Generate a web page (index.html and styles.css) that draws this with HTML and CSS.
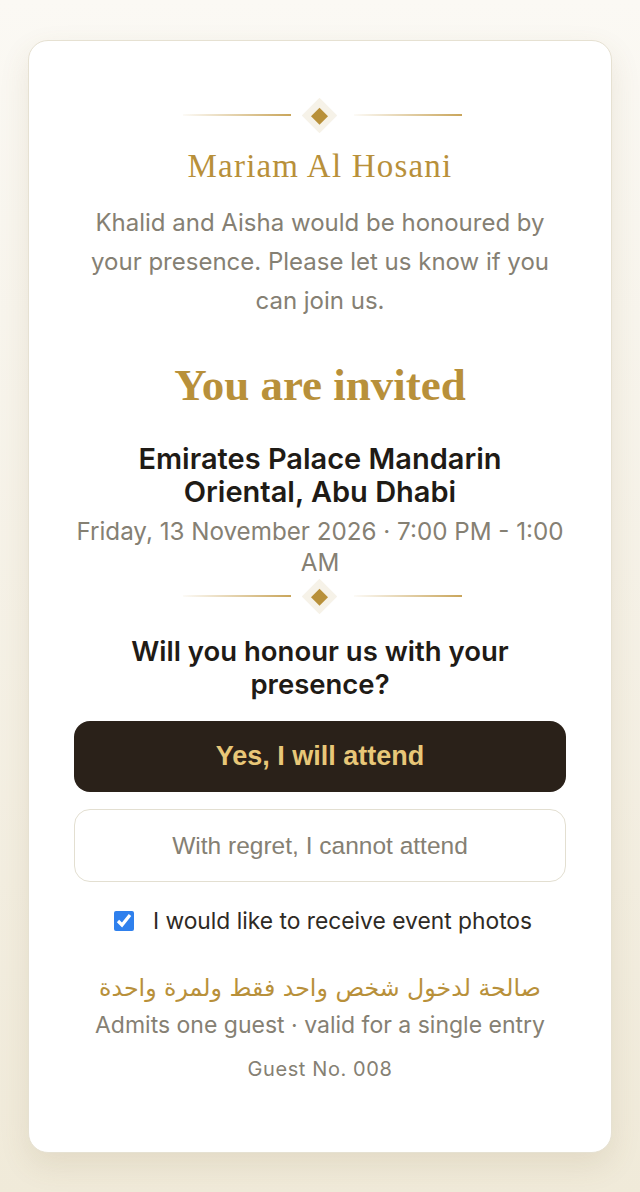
FILE: index.html
```html
<!DOCTYPE html>
<html lang="en">
<head>
  <meta charset="UTF-8" />
  <meta name="viewport" content="width=device-width, initial-scale=1.0" />
  <title>Invitation RSVP</title>
  <link rel="stylesheet" href="styles.css">
</head>
<body>

  <div class="card">
    <div class="ornament">
      <span class="line"></span>
      <span class="gem"><span class="gem-inner"></span></span>
      <span class="line"></span>
    </div>

    <h2 class="guest-name">Mariam Al Hosani</h2>
    <p class="intro">Khalid and Aisha would be honoured by your presence. Please let us know if you can join us.</p>

    <h1 class="title">You are invited</h1>

    <div class="venue">Emirates Palace Mandarin Oriental, Abu Dhabi</div>
    <div class="date">Friday, 13 November 2026 · 7:00 PM - 1:00 AM</div>

    <div class="ornament">
      <span class="line"></span>
      <span class="gem"><span class="gem-inner"></span></span>
      <span class="line"></span>
    </div>

    <h3 class="question">Will you honour us with your presence?</h3>

    <div class="actions">
      <button class="btn btn-yes" type="button">Yes, I will attend</button>
      <button class="btn btn-no" type="button">With regret, I cannot attend</button>
    </div>

    <label class="photos">
      <input type="checkbox" checked />
      <span>I would like to receive event photos</span>
    </label>

    <p class="arabic" dir="rtl" lang="ar">صالحة لدخول شخص واحد فقط ولمرة واحدة</p>
    <p class="admits">Admits one guest · valid for a single entry</p>
    <p class="guest-no">Guest No. 008</p>
  </div>

</body>
</html>
```

FILE: styles.css
```css
* {
  margin: 0;
  padding: 0;
  box-sizing: border-box;
}

body {
  min-height: 1192px;
  padding: 40px 28px 41px;
  font-family: 'Inter', 'Noto Sans', sans-serif;
  background: linear-gradient(to bottom, #fbf9f4, #f0ead9);
  color: #1f1b16;
}

.card {
  background: #ffffff;
  border: 1px solid #e6e1d2;
  border-radius: 20px;
  box-shadow: 0 12px 30px rgba(120, 100, 50, 0.12);
  padding: 56px 45px 69px;
  text-align: center;
}

/* divider with a diamond in the middle */
.ornament {
  display: flex;
  justify-content: center;
  align-items: center;
  height: 36px;
  padding-left: 4px;
}

.ornament .line {
  width: 108px;
  height: 2px;
  background: linear-gradient(to right, rgba(201, 165, 90, 0.05), #c9a55a);
}

.gem {
  width: 25px;
  height: 25px;
  margin: 0 22px 0 16px;
  background: #f6f2e8;
  transform: rotate(45deg);
  display: flex;
  justify-content: center;
  align-items: center;
}

.gem-inner {
  width: 12px;
  height: 12px;
  background: #b8903a;
}

.guest-name {
  font-family: 'Liberation Serif', serif;
  font-weight: 400;
  font-size: 33px;
  letter-spacing: 1.2px;
  color: #b8903a;
  margin-top: 13px;
  line-height: 40px;
}

.intro {
  font-size: 24px;
  line-height: 39px;
  color: #858073;
  margin-top: 17px;
}

.title {
  font-family: 'Liberation Serif', serif;
  font-weight: 700;
  font-size: 45px;
  color: #b8903a;
  line-height: 56px;
  margin-top: 37px;
}

.venue {
  font-size: 29px;
  font-weight: 600;
  line-height: 33px;
  color: #1f1b16;
  margin-top: 29px;
  padding: 0 30px;
}

.date {
  font-size: 24.2px;
  line-height: 31px;
  color: #858073;
  margin-top: 8px;
}

.question {
  font-size: 27.5px;
  font-weight: 600;
  line-height: 33px;
  color: #1f1b16;
  margin-top: 21px;
}

.actions {
  display: flex;
  flex-direction: column;
  gap: 17px;
  margin-top: 20px;
}

.btn {
  width: 100%;
  border-radius: 16px;
  font-family: 'Liberation Sans', Arial, sans-serif;
  cursor: pointer;
}

.btn-yes {
  height: 71px;
  background: #2a2119;
  border: none;
  color: #e8c778;
  font-size: 27px;
  font-weight: 700;
}

.btn-no {
  height: 73px;
  background: #ffffff;
  border: 1px solid #e3dfd1;
  color: #858073;
  font-size: 24.5px;
}

.photos {
  display: flex;
  justify-content: center;
  align-items: center;
  gap: 19px;
  margin-top: 25px;
  padding-left: 6px;
  font-size: 22.8px;
  line-height: 28px;
  color: #2e2a25;
}

.photos input {
  width: 20px;
  height: 20px;
  accent-color: #2f80ed;
}

.arabic {
  font-family: 'DejaVu Sans', sans-serif;
  font-size: 23.7px;
  color: #b8903a;
  line-height: 40px;
  margin-top: 33px;
}

.admits {
  font-size: 23px;
  color: #858073;
  line-height: 30px;
  margin-top: 2px;
}

.guest-no {
  font-size: 20px;
  color: #858073;
  letter-spacing: 0.6px;
  line-height: 28px;
  margin-top: 15px;
}
```
